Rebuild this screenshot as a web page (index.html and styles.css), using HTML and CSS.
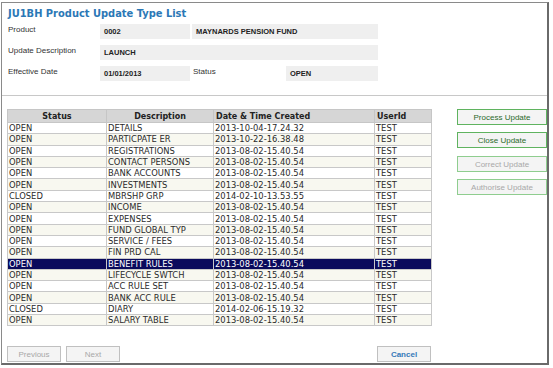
FILE: index.html
```html
<!DOCTYPE html>
<html lang="en">
<head>
    <meta charset="UTF-8">
    <title>JU1BH Product Update Type List</title>
    <link rel="stylesheet" href="styles.css">
</head>
<body>
    <div class="panel">
        <h1 class="title">JU1BH Product Update Type List</h1>

        <div class="header-form">
            <div class="form-row">
                <span class="label">Product</span>
                <span class="field short">0002</span>
                <span class="field mid">MAYNARDS PENSION FUND</span>
            </div>
            <div class="form-row">
                <span class="label">Update Description</span>
                <span class="field long">LAUNCH</span>
            </div>
            <div class="form-row">
                <span class="label">Effective Date</span>
                <span class="field short">01/01/2013</span>
                <span class="label status-label">Status</span>
                <span class="field status">OPEN</span>
            </div>
        </div>

        <div class="content">
            <table class="list">
                <colgroup>
                    <col class="c-status">
                    <col class="c-desc">
                    <col class="c-date">
                    <col class="c-user">
                </colgroup>
                <thead>
                    <tr>
                        <th>Status</th>
                        <th>Description</th>
                        <th class="left">Date &amp; Time Created</th>
                        <th class="left">UserId</th>
                    </tr>
                </thead>
                <tbody id="rows"></tbody>
            </table>

            <div class="actions">
                <button class="btn green">Process Update</button>
                <button class="btn green">Close Update</button>
                <button class="btn green disabled">Correct Update</button>
                <button class="btn green disabled">Authorise Update</button>
            </div>
        </div>

        <div class="footer">
            <button class="btn plain disabled">Previous</button>
            <button class="btn plain disabled">Next</button>
            <button class="btn plain cancel">Cancel</button>
        </div>
    </div>

    <script>
    const data = [
        ['OPEN', 'DETAILS', '2013-10-04-17.24.32'],
        ['OPEN', 'PARTICPATE ER', '2013-10-22-16.38.48'],
        ['OPEN', 'REGISTRATIONS', '2013-08-02-15.40.54'],
        ['OPEN', 'CONTACT PERSONS', '2013-08-02-15.40.54'],
        ['OPEN', 'BANK ACCOUNTS', '2013-08-02-15.40.54'],
        ['OPEN', 'INVESTMENTS', '2013-08-02-15.40.54'],
        ['CLOSED', 'MBRSHP GRP', '2014-02-10-13.53.55'],
        ['OPEN', 'INCOME', '2013-08-02-15.40.54'],
        ['OPEN', 'EXPENSES', '2013-08-02-15.40.54'],
        ['OPEN', 'FUND GLOBAL TYP', '2013-08-02-15.40.54'],
        ['OPEN', 'SERVICE / FEES', '2013-08-02-15.40.54'],
        ['OPEN', 'FIN PRD CAL', '2013-08-02-15.40.54'],
        ['OPEN', 'BENEFIT RULES', '2013-08-02-15.40.54'],
        ['OPEN', 'LIFECYCLE SWTCH', '2013-08-02-15.40.54'],
        ['OPEN', 'ACC RULE SET', '2013-08-02-15.40.54'],
        ['OPEN', 'BANK ACC RULE', '2013-08-02-15.40.54'],
        ['CLOSED', 'DIARY', '2014-02-06-15.19.32'],
        ['OPEN', 'SALARY TABLE', '2013-08-02-15.40.54']
    ];

    const tbody = document.getElementById('rows');
    data.forEach((row, i) => {
        const tr = document.createElement('tr');
        if (row[1] === 'BENEFIT RULES') tr.className = 'selected';
        else if (i % 2 === 1) tr.className = 'alt';
        [row[0], row[1], row[2], 'TEST'].forEach(text => {
            const td = document.createElement('td');
            td.textContent = text;
            tr.appendChild(td);
        });
        tbody.appendChild(tr);
    });
    </script>
</body>
</html>
```

FILE: styles.css
```css
body {
    margin: 0;
    padding: 0;
    background: #ffffff;
    font-family: "Liberation Sans", Arial, sans-serif;
    color: #222;
}
.panel {
    box-sizing: border-box;
    width: 548px;
    height: 363px;
    margin: 2px 0 0 1px;
    border: 1px solid #8a8a8a;
    border-right: 2px solid #6a6a6a;
    border-bottom: 2px solid #6a6a6a;
    display: flex;
    flex-direction: column;
}
.title {
    margin: 3px 0 0 6px;
    font-family: "DejaVu Sans Condensed", "DejaVu Sans", sans-serif;
    font-size: 11px;
    font-weight: bold;
    color: #2b78b6;
    line-height: 15px;
}
.header-form {
    padding: 3px 0 14px 0;
    display: flex;
    flex-direction: column;
    gap: 6px;
    border-bottom: 1px solid #c8c8c8;
}
.form-row {
    display: flex;
    align-items: center;
    height: 15px;
}
.label {
    width: 92px;
    padding-left: 6px;
    font-size: 8px;
    color: #333;
    align-self: flex-start;
    line-height: 11px;
}
.field {
    box-sizing: border-box;
    height: 15px;
    background: #efefef;
    font-size: 7.5px;
    font-weight: bold;
    line-height: 15px;
    padding-left: 4px;
    color: #222;
}
.short { width: 90px; }
.mid { width: 186px; margin-left: 2px; }
.long { width: 278px; }
.status-label {
    width: 93px;
    padding-left: 3px;
}
.status {
    width: 92px;
    padding-left: 4px;
}
.content {
    display: flex;
    padding: 13px 0 0 5px;
    align-items: flex-start;
}
.list {
    border-collapse: collapse;
    table-layout: fixed;
    width: 424px;
    font-family: "DejaVu Sans", Verdana, sans-serif;
    font-size: 8.4px;
    border: 1px solid #b0b0b0;
}
.c-status { width: 99px; }
.c-desc { width: 107px; }
.c-date { width: 161px; }
.c-user { width: 57px; }
.list th {
    background: #d6d6d6;
    font-weight: bold;
    font-size: 8px;
    height: 12px;
    padding: 0 2px;
    border: 1px solid #c6c6c6;
    text-align: center;
    color: #222;
    white-space: nowrap;
}
.list th.left { text-align: left; }
.list td {
    height: 10.3px;
    padding: 0 1px;
    border: 1px solid #c8c8c8;
    line-height: 10px;
    white-space: nowrap;
    overflow: hidden;
    color: #2a2a2a;
}
.list tr.alt td { background: #f8f8f0; }
.list tr.selected td {
    background: #0a0a5c;
    color: #ffffff;
}
.actions {
    margin-left: 25px;
    display: flex;
    flex-direction: column;
    gap: 7px;
}
.btn {
    box-sizing: border-box;
    height: 16px;
    padding: 0;
    font-family: "Liberation Sans", Arial, sans-serif;
    font-size: 8px;
    background: #f4f4f4;
    border: 1px solid #b8b8b8;
    color: #444;
}
.btn.green {
    width: 90px;
    border-color: #5fb35f;
    color: #2a6a2a;
}
.btn.green.disabled {
    border-color: #8fcd8f;
    color: #a8a8a8;
}
.actions .btn:nth-child(3) { margin-top: 1px; }
.footer {
    margin-top: auto;
    display: flex;
    padding: 0 0 1px 5px;
    gap: 5px;
}
.btn.plain {
    width: 54px;
    border-color: #c0c0c0;
}
.btn.plain.disabled { color: #a8a8a8; }
.btn.cancel {
    margin-left: 252px;
    color: #3579b8;
    font-weight: bold;
}
```
